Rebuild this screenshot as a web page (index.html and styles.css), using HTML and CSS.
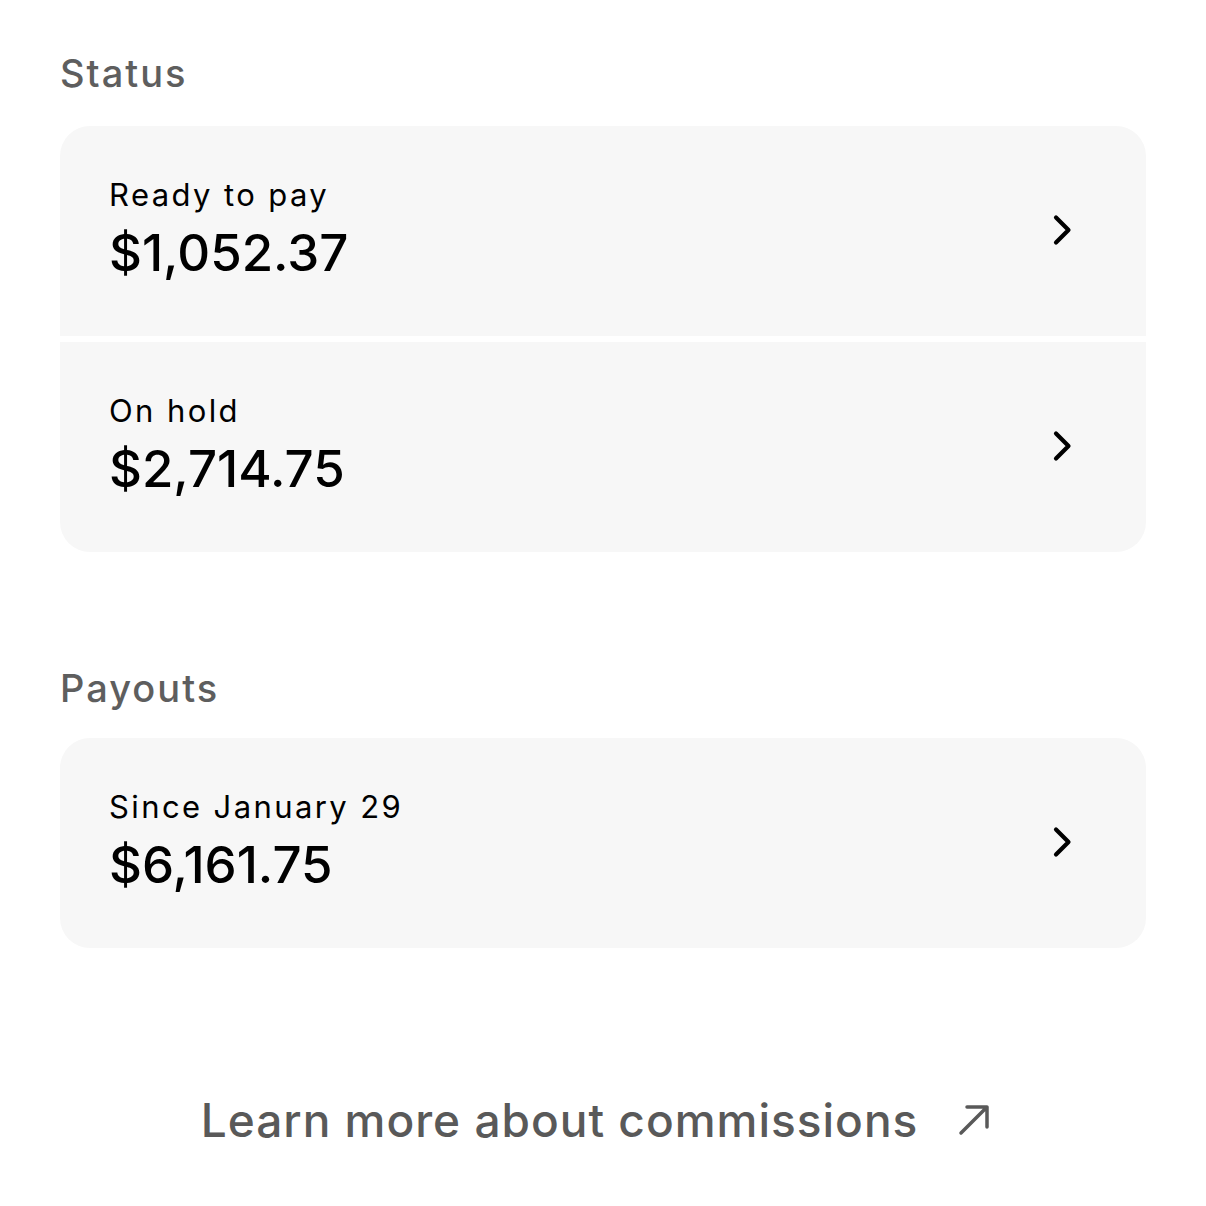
FILE: index.html
```html
<!DOCTYPE html>
<html>
<head>
  <meta charset="UTF-8">
  <title>Commissions</title>
  <link rel="stylesheet" href="styles.css">
</head>
<body>

<div class="page">
  <h2 class="section-title">Status</h2>
  <div class="card-group">
    <div class="card">
      <div class="card-text">
        <div class="card-label">Ready to pay</div>
        <div class="card-amount">$1,052.37</div>
      </div>
      <svg class="chevron" viewBox="0 0 24 32"><path d="M6 3.5 L18.5 16 L6 28.5"/></svg>
    </div>
    <div class="card">
      <div class="card-text">
        <div class="card-label">On hold</div>
        <div class="card-amount">$2,714.75</div>
      </div>
      <svg class="chevron" viewBox="0 0 24 32"><path d="M6 3.5 L18.5 16 L6 28.5"/></svg>
    </div>
  </div>

  <h2 class="section-title payouts-title">Payouts</h2>
  <div class="card-group payouts-group">
    <div class="card">
      <div class="card-text">
        <div class="card-label">Since January 29</div>
        <div class="card-amount">$6,161.75</div>
      </div>
      <svg class="chevron" viewBox="0 0 24 32"><path d="M6 3.5 L18.5 16 L6 28.5"/></svg>
    </div>
  </div>

  <div class="learn-more">
    <span>Learn more about commissions</span>
    <svg class="arrow" viewBox="0 0 32 32"><path d="M3 29 L29 3 M9 3 L29 3 L29 23"/></svg>
  </div>
</div>

</body>
</html>
```

FILE: styles.css
```css
html, body {
  margin: 0;
  padding: 0;
  background: #fff;
  font-family: Inter, "Noto Sans", sans-serif;
  color: #000;
}

.page {
  padding: 49px 60px 0;
}

.section-title {
  margin: 0 0 29px;
  font-size: 38px;
  line-height: 48px;
  font-weight: 500;
  letter-spacing: 2px;
  color: #5e5e5e;
}

.payouts-title {
  margin-top: 112px;
  margin-bottom: 26px;
}

.card-group {
  display: flex;
  flex-direction: column;
  gap: 6px;
  border-radius: 30px;
  overflow: hidden;
}

.card {
  display: flex;
  align-items: center;
  justify-content: space-between;
  background: #f7f7f7;
  padding: 50px 72px 53px 49px;
}

.card-label {
  font-size: 31px;
  line-height: 38px;
  letter-spacing: 2.4px;
  margin-bottom: 9px;
}

.card-amount {
  font-size: 51px;
  line-height: 60px;
  font-weight: 550;
}

.chevron {
  width: 24px;
  height: 32px;
  fill: none;
  stroke: #000;
  stroke-width: 4.2;
  stroke-linecap: round;
  stroke-linejoin: round;
}

.learn-more {
  margin-top: 144px;
  padding-right: 15px;
  display: flex;
  align-items: center;
  justify-content: center;
  gap: 40px;
  font-size: 46px;
  line-height: 56px;
  font-weight: 500;
  letter-spacing: 1px;
  color: #595959;
}

.arrow {
  width: 32px;
  height: 32px;
  fill: none;
  stroke: #595959;
  stroke-width: 3.5;
  stroke-linecap: round;
  stroke-linejoin: round;
}
```
